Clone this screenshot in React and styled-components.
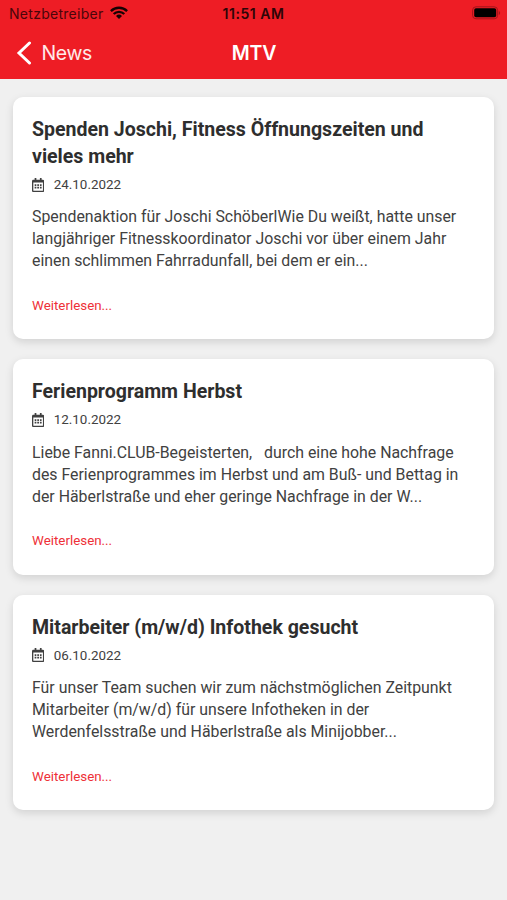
import styled, { createGlobalStyle } from 'styled-components'
import { FaRegCalendarAlt } from 'react-icons/fa'

const GlobalStyle = createGlobalStyle`
  body {
    background-color: #f0f0f0;
    color: #414141;
    font-family: Roboto, sans-serif;
    margin: 0;
  }
`

const Screen = styled.div`
  display: flex;
  flex-direction: column;
  height: 900px;
  overflow: hidden;
`

const Header = styled.header`
  background-color: #ee1d25;
  box-sizing: border-box;
  flex: none;
  font-family: Inter, sans-serif;
  height: 79px;
`

const Columns = styled.div`
  align-items: center;
  display: grid;
  grid-template-columns: 1fr auto 1fr;
`

const StatusBar = styled(Columns)`
  color: #4a060a;
  font-size: 14px;
  height: 27px;
  padding: 0 6px 0 9px;
`

const Carrier = styled.div`
  align-items: center;
  display: flex;
  gap: 6px;
  letter-spacing: 0.28px;

  svg {
    margin-bottom: 2px;
  }
`

const Clock = styled.div`
  color: #2d0507;
  font-size: 14px;
  font-weight: 600;
  letter-spacing: 0.55px;
  margin-right: 3px;
`

const BatteryIcon = styled.svg`
  justify-self: end;
  margin-bottom: 1px;
`

const NavBar = styled(Columns)`
  color: #fff;
  height: 51px;
  padding: 0 16px;
`

const BackButton = styled.button`
  align-items: center;
  background: none;
  border: 0;
  color: #ffe9e9;
  display: flex;
  font: 400 19.5px Inter, sans-serif;
  gap: 9.5px;
  justify-self: start;
  letter-spacing: -0.4px;
  padding: 0;
`

const NavTitle = styled.h1`
  font-size: 19.5px;
  font-weight: 600;
  letter-spacing: -0.1px;
  margin: 0 0 0 1px;
`

const List = styled.main`
  display: flex;
  flex-direction: column;
  gap: 20px;
  padding: 18px 13px;
`

const Card = styled.article`
  background-color: #fff;
  border-radius: 10px;
  box-shadow: 0 3px 9px rgba(0, 0, 0, 0.13);
  padding: 19px 19px 22.3px;
`

const Title = styled.h2`
  color: #2e2e2e;
  font-size: 19.55px;
  font-weight: 700;
  line-height: 27px;
  margin: 0;
`

const DateRow = styled.div`
  align-items: center;
  display: flex;
  font-size: 13.4px;
  gap: 9.5px;
  height: 29px;

  svg {
    height: 14px;
    width: 12.25px;
  }
`

const Excerpt = styled.p`
  font-size: 15.86px;
  line-height: 22px;
  margin: 7.3px 0 21.7px;
  white-space: pre;
`

const ReadMore = styled.a`
  color: #ee3138;
  display: block;
  font-size: 13.35px;
  line-height: 23px;
`

const news = [
  {
    title: 'Spenden Joschi, Fitness Öffnungszeiten und vieles mehr',
    date: '24.10.2022',
    excerpt: `Spendenaktion für Joschi SchöberlWie Du weißt, hatte unser
langjähriger Fitnesskoordinator Joschi vor über einem Jahr
einen schlimmen Fahrradunfall, bei dem er ein...`,
  },
  {
    title: 'Ferienprogramm Herbst',
    date: '12.10.2022',
    excerpt: `Liebe Fanni.CLUB-Begeisterten,   durch eine hohe Nachfrage
des Ferienprogrammes im Herbst und am Buß- und Bettag in
der Häberlstraße und eher geringe Nachfrage in der W...`,
  },
  {
    title: 'Mitarbeiter (m/w/d) Infothek gesucht',
    date: '06.10.2022',
    excerpt: `Für unser Team suchen wir zum nächstmöglichen Zeitpunkt
Mitarbeiter (m/w/d) für unsere Infotheken in der
Werdenfelsstraße und Häberlstraße als Minijobber...`,
  },
]

const WifiIcon = () => (
  <svg width="18" height="13" viewBox="0 0 18 13" fill="none" stroke="#160203" strokeWidth="2.3">
    <path d="M0.9 5.1a11.5 11.5 0 0 1 16.2 0" />
    <path d="M3.7 8a7.5 7.5 0 0 1 10.6 0" />
    <path d="M9 13L6 10a4.3 4.3 0 0 1 6 0z" fill="#160203" stroke="none" />
  </svg>
)

const Battery = () => (
  <BatteryIcon width="29" height="14" viewBox="0 0 29 14">
    <rect x="0.6" y="0.8" width="25" height="12" rx="3.4" fill="none" stroke="#a3141a" />
    <rect x="2.2" y="2.3" width="22" height="9" rx="1.8" fill="#000" />
    <path d="M26.8 5v4c1.8-.6 1.8-3.4 0-4z" fill="#a3141a" />
  </BatteryIcon>
)

const BackIcon = () => (
  <svg width="16" height="24" viewBox="0 0 16 24" fill="none" stroke="#fff" strokeWidth="3">
    <path d="M13.5 2L3 12l10.500 10" strokeLinecap="round" />
  </svg>
)

const NewsCard = ({ title, date, excerpt }) => (
  <Card>
    <Title>{title}</Title>
    <DateRow>
      <FaRegCalendarAlt />
      <time>{date}</time>
    </DateRow>
    <Excerpt>{excerpt}</Excerpt>
    <ReadMore>Weiterlesen...</ReadMore>
  </Card>
)

const App = () => (
  <>
    <GlobalStyle />
    <Screen>
      <Header>
        <StatusBar>
          <Carrier>
            Netzbetreiber
            <WifiIcon />
          </Carrier>
          <Clock>11:51 AM</Clock>
          <Battery />
        </StatusBar>
        <NavBar>
          <BackButton>
            <BackIcon />
            News
          </BackButton>
          <NavTitle>MTV</NavTitle>
        </NavBar>
      </Header>
      <List>
        {news.map(item => <NewsCard key={item.date} {...item} />)}
      </List>
    </Screen>
  </>
)

export default App
